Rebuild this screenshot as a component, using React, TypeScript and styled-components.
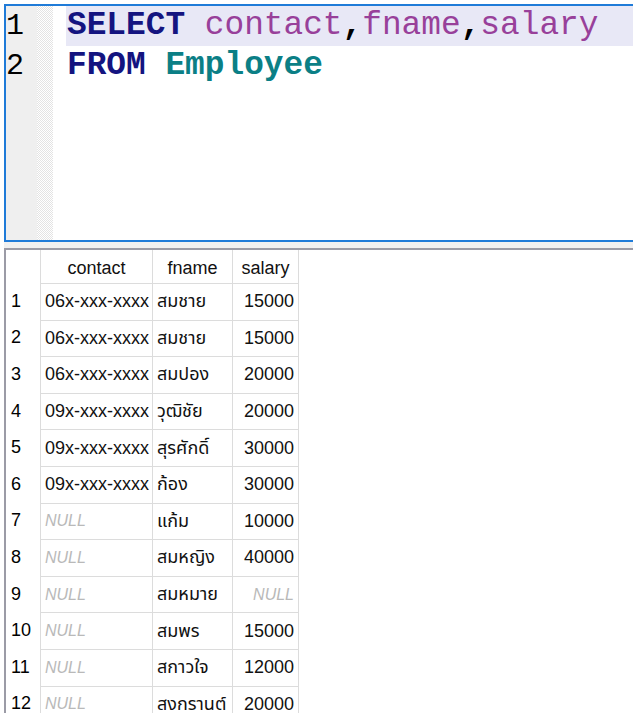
import React from "react";
import styled, { createGlobalStyle } from "styled-components";

const GlobalStyle = createGlobalStyle`
  html, body { margin: 0; padding: 0; background: #ffffff; overflow: hidden; }
  #root { width: 633px; height: 713px; }
`;

const Page = styled.div`
  box-sizing: border-box;
  width: 633px;
  height: 713px;
  padding: 4px 0 0 4px;
  display: flex;
  flex-direction: column;
  overflow: hidden;
  background: #ffffff;
`;

const Editor = styled.div`
  box-sizing: border-box;
  height: 238px;
  border: 2px solid #1f7bd8;
  border-right: none;
  display: flex;
  background: #ffffff;
  flex-shrink: 0;
`;

const Gutter = styled.div`
  width: 31px;
  background: #efefef;
  display: flex;
  flex-direction: column;
  font-family: "Liberation Mono", monospace;
  font-size: 30px;
  color: #000000;
`;

const GutterNum = styled.div`
  height: 40px;
  line-height: 41px;
  padding-left: 0;
`;

const Dots = styled.div`
  width: 16px;
  background-color: #ffffff;
  background-image: repeating-conic-gradient(#e3e3e3 0 25%, #ffffff 0 50%);
  background-size: 2px 2px;
`;

const Code = styled.div`
  flex: 1;
  padding-left: 13px;
  display: flex;
  flex-direction: column;
  font-family: "Liberation Mono", "Courier New", monospace;
  font-size: 32.8px;
  white-space: pre;
`;

const CodeLine = styled.div<{ $active?: boolean }>`
  height: 40px;
  line-height: 40px;
  padding-left: 1px;
  background: ${(p) => (p.$active ? "#e8e8f6" : "transparent")};
`;

const Kw = styled.span`
  color: #141480;
  font-weight: bold;
`;
const Col = styled.span`
  color: #98409a;
`;
const Punct = styled.span`
  color: #000000;
  font-weight: bold;
`;
const Tbl = styled.span`
  color: #0b7f86;
  font-weight: bold;
`;

const Splitter = styled.div`
  height: 6px;
  background: #f0f0f0;
  flex-shrink: 0;
`;

const Results = styled.div`
  flex: 1;
  border-top: 2px solid #9b9ba6;
  border-left: 2px solid #9b9ba6;
  background: #ffffff;
  overflow: hidden;
`;

const Grid = styled.div`
  display: grid;
  grid-template-columns: 34px 112px 80px 67px;
  grid-template-rows: 33px;
  grid-auto-rows: 36.6px;
  font-family: "Liberation Sans", Tahoma, "Noto Sans Thai", sans-serif;
  font-size: 18px;
  color: #111111;
`;

const HeadCell = styled.div<{ $first?: boolean; $last?: boolean }>`
  box-sizing: border-box;
  display: flex;
  align-items: center;
  justify-content: center;
  padding-top: 3px;
  border-left: ${(p) => (p.$first ? "none" : "1px solid #dcdcdc")};
  border-right: ${(p) => (p.$last ? "1px solid #dcdcdc" : "none")};
`;

const RowNum = styled.div`
  box-sizing: border-box;
  display: flex;
  align-items: center;
  padding-left: 5px;
  color: #000000;
`;

const Cell = styled.div<{ $align?: "left" | "right"; $last?: boolean }>`
  box-sizing: border-box;
  display: flex;
  align-items: center;
  justify-content: ${(p) => (p.$align === "right" ? "flex-end" : "flex-start")};
  padding: 0 4px 0 4px;
  border-left: 1px solid #dcdcdc;
  border-top: 1px solid #dcdcdc;
  border-right: ${(p) => (p.$last ? "1px solid #dcdcdc" : "none")};
  white-space: nowrap;
  overflow: hidden;
`;

const Null = styled.span`
  font-style: italic;
  font-size: 16px;
  color: #b9b9b9;
`;

type Row = { contact: string | null; fname: string; salary: string | null };

const rows: Row[] = [
  { contact: "06x-xxx-xxxx", fname: "สมชาย", salary: "15000" },
  { contact: "06x-xxx-xxxx", fname: "สมชาย", salary: "15000" },
  { contact: "06x-xxx-xxxx", fname: "สมปอง", salary: "20000" },
  { contact: "09x-xxx-xxxx", fname: "วุฒิชัย", salary: "20000" },
  { contact: "09x-xxx-xxxx", fname: "สุรศักดิ์", salary: "30000" },
  { contact: "09x-xxx-xxxx", fname: "ก้อง", salary: "30000" },
  { contact: null, fname: "แก้ม", salary: "10000" },
  { contact: null, fname: "สมหญิง", salary: "40000" },
  { contact: null, fname: "สมหมาย", salary: null },
  { contact: null, fname: "สมพร", salary: "15000" },
  { contact: null, fname: "สกาวใจ", salary: "12000" },
  { contact: null, fname: "สงกรานต์", salary: "20000" },
];

export default function App() {
  return (
    <>
      <GlobalStyle />
      <Page>
        <Editor>
          <Gutter>
            <GutterNum>1</GutterNum>
            <GutterNum>2</GutterNum>
          </Gutter>
          <Dots />
          <Code>
            <CodeLine $active>
              <Kw>SELECT</Kw> <Col>contact</Col>
              <Punct>,</Punct>
              <Col>fname</Col>
              <Punct>,</Punct>
              <Col>salary</Col>
            </CodeLine>
            <CodeLine>
              <Kw>FROM</Kw> <Tbl>Employee</Tbl>
            </CodeLine>
          </Code>
        </Editor>
        <Splitter />
        <Results>
          <Grid>
            <HeadCell $first />
            <HeadCell>contact</HeadCell>
            <HeadCell>fname</HeadCell>
            <HeadCell $last>salary</HeadCell>
            {rows.map((r, i) => (
              <React.Fragment key={i}>
                <RowNum>{i + 1}</RowNum>
                <Cell>{r.contact === null ? <Null>NULL</Null> : r.contact}</Cell>
                <Cell>{r.fname}</Cell>
                <Cell $align="right" $last>
                  {r.salary === null ? <Null>NULL</Null> : r.salary}
                </Cell>
              </React.Fragment>
            ))}
          </Grid>
        </Results>
      </Page>
    </>
  );
}
